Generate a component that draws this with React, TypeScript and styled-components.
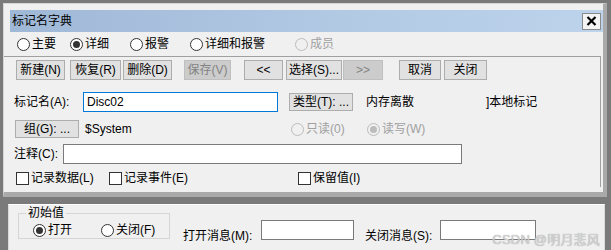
import styled, { createGlobalStyle } from 'styled-components'

const GlobalStyle = createGlobalStyle`
    body {
        margin: 0;
        background: #7a7a7a;
        font-family: "Liberation Sans", "Noto Sans CJK SC", sans-serif;
        font-size: 12px;
        color: #000;
        overflow: hidden;
    }
`

const Page = styled.div`
    width: 611px;
    height: 250px;
    padding: 3px 0 0 3px;
    box-sizing: border-box;
    overflow: hidden;
`
const Window = styled.div`
    width: 604px;
    box-sizing: border-box;
    background: #f0f0f0;
    border-top: 1px solid #d6d6d6;
    border-left: 1px solid #d6d6d6;
    border-right: 4px solid #a9a9a9;
    border-bottom: 5px solid #a9a9a9;
    padding-bottom: 5px;
`
const TitleBar = styled.div`
    margin: 6px 0 0 6px;
    height: 22px;
    padding-left: 2px;
    display: flex;
    align-items: center;
    justify-content: space-between;
    background: linear-gradient(90deg, #9fb8d6 0%, #b2c9e4 55%, #bdd3ec 100%);
`
const TitleText = styled.span`
    font-size: 12px;
    line-height: 22px;
`
const CloseButton = styled.div`
    width: 19px;
    height: 17px;
    margin-right: 2px;
    box-sizing: border-box;
    border: 1px solid #8a8a8a;
    background: #f4f4f4;
    display: flex;
    align-items: center;
    justify-content: center;
`
const Row = styled.div<{ $h: number; $mt?: number; $pl?: number }>`
    display: flex;
    align-items: center;
    height: ${(p) => p.$h}px;
    margin-top: ${(p) => p.$mt ?? 0}px;
    padding-left: ${(p) => p.$pl ?? 0}px;
    white-space: nowrap;
`
const Panel = styled.div`
    border-top: 1px solid #a0a0a0;
    border-right: 1px solid #a0a0a0;
    margin-right: 2px;
`
const Item = styled.div<{ $w?: number; $ml?: number; $disabled?: boolean }>`
    display: flex;
    align-items: center;
    flex: none;
    width: ${(p) => (p.$w ? `${p.$w}px` : 'auto')};
    margin-left: ${(p) => p.$ml ?? 0}px;
    color: ${(p) => (p.$disabled ? '#a0a0a0' : '#000')};
    line-height: 14px;
`
const Circle = styled.span<{ $checked?: boolean; $disabled?: boolean }>`
    position: relative;
    width: 13px;
    height: 13px;
    box-sizing: border-box;
    border-radius: 50%;
    border: 1px solid ${(p) => (p.$disabled ? '#bcbcbc' : '#333')};
    background: ${(p) => (p.$disabled ? '#f0f0f0' : '#fff')};
    margin-right: 2px;
    flex: none;
    &::after {
        content: '';
        display: ${(p) => (p.$checked ? 'block' : 'none')};
        position: absolute;
        left: 2px;
        top: 2px;
        width: 7px;
        height: 7px;
        border-radius: 50%;
        background: ${(p) => (p.$disabled ? '#bcbcbc' : '#333')};
    }
`
const Box = styled.span`
    width: 13px;
    height: 13px;
    box-sizing: border-box;
    border: 1px solid #333;
    background: #fff;
    margin-right: 2px;
    flex: none;
`
const Button = styled.div<{ $w: number; $ml?: number; $h?: number; $disabled?: boolean }>`
    flex: none;
    width: ${(p) => p.$w}px;
    height: ${(p) => p.$h ?? 20}px;
    margin-left: ${(p) => p.$ml ?? 0}px;
    box-sizing: border-box;
    border: 1px solid ${(p) => (p.$disabled ? '#bfbfbf' : '#adadad')};
    background: ${(p) => (p.$disabled ? '#cccccc' : '#e1e1e1')};
    color: ${(p) => (p.$disabled ? '#838383' : '#000')};
    display: flex;
    align-items: center;
    justify-content: center;
    line-height: 14px;
`
const Label = styled.span<{ $w?: number; $ml?: number }>`
    flex: none;
    width: ${(p) => (p.$w ? `${p.$w}px` : 'auto')};
    margin-left: ${(p) => p.$ml ?? 0}px;
    line-height: 14px;
`
const Input = styled.div<{ $w: number; $focus?: boolean; $mt?: number }>`
    flex: none;
    width: ${(p) => p.$w}px;
    height: 20px;
    margin-top: ${(p) => p.$mt ?? 0}px;
    box-sizing: border-box;
    border: 1px solid ${(p) => (p.$focus ? '#0078d7' : '#7a7a7a')};
    background: #fff;
    padding-left: 3px;
    display: flex;
    align-items: center;
    line-height: 14px;
`
const Panel2 = styled.div`
    position: relative;
    margin: 7px 0 0 5px;
    width: 597px;
    height: 60px;
    box-sizing: border-box;
    background: #f0f0f0;
    border-top: 1px solid #fff;
    border-left: 1px solid #dadada;
    border-right: 1px solid #dadada;
    padding: 8px 0 0 9px;
    display: flex;
    align-items: flex-start;
`
const GroupBox = styled.div`
    position: relative;
    width: 152px;
    height: 26px;
    box-sizing: border-box;
    border: 1px solid #d5d5d5;
    padding: 8px 0 0 14px;
    display: flex;
    align-items: center;
`
const GroupTitle = styled.span`
    position: absolute;
    left: 7px;
    top: -8px;
    padding: 0 2px;
    background: #f0f0f0;
    line-height: 14px;
`
const Field = styled.div<{ $ml: number }>`
    display: flex;
    align-items: flex-start;
    margin-left: ${(p) => p.$ml}px;
    white-space: nowrap;
`
const FieldLabel = styled.span<{ $w: number }>`
    width: ${(p) => p.$w}px;
    margin-top: 16px;
    line-height: 14px;
`
const Watermark = styled.span`
    position: absolute;
    right: 4px;
    top: 27px;
    font-size: 13px;
    line-height: 15px;
    color: #d2d2d2;
    text-shadow: 0 0 1px #9a9a9a;
    letter-spacing: 0.2px;
    white-space: nowrap;
`

const Radio = ({ label, checked, disabled, w, ml }: { label: string; checked?: boolean; disabled?: boolean; w?: number; ml?: number }) => (
    <Item $w={w} $ml={ml} $disabled={disabled}>
        <Circle $checked={checked} $disabled={disabled} />
        {label}
    </Item>
)

const Check = ({ label, w }: { label: string; w?: number }) => (
    <Item $w={w}>
        <Box />
        {label}
    </Item>
)

export default function App() {
    return (
        <Page>
            <GlobalStyle />
            <Window>
                <TitleBar>
                    <TitleText>标记名字典</TitleText>
                    <CloseButton>
                        <svg width="11" height="10" viewBox="0 0 11 10">
                            <path d="M1.5 1 L9.5 9 M9.5 1 L1.5 9" stroke="#000" strokeWidth="2.2" />
                        </svg>
                    </CloseButton>
                </TitleBar>
                <Row $h={24} $pl={13}>
                    <Radio label="主要" w={53} />
                    <Radio label="详细" checked w={60} />
                    <Radio label="报警" w={60} />
                    <Radio label="详细和报警" w={105} />
                    <Radio label="成员" disabled />
                </Row>
                <Panel>
                    <Row $h={20} $mt={3} $pl={12}>
                        <Button $w={49}>新建(N)</Button>
                        <Button $w={51} $ml={5}>恢复(R)</Button>
                        <Button $w={49} $ml={2}>删除(D)</Button>
                        <Button $w={47} $ml={12} $disabled>保存(V)</Button>
                        <Button $w={39} $ml={13}>&lt;&lt;</Button>
                        <Button $w={56} $ml={3}>选择(S)...</Button>
                        <Button $w={40} $ml={1} $disabled>&gt;&gt;</Button>
                        <Button $w={42} $ml={16}>取消</Button>
                        <Button $w={43} $ml={3}>关闭</Button>
                    </Row>
                    <Row $h={20} $mt={12} $pl={10}>
                        <Label $w={69}>标记名(A):</Label>
                        <Input $w={195} $focus>Disc02</Input>
                        <Button $w={64} $h={18} $ml={11}>类型(T): ...</Button>
                        <Label $ml={13}>内存离散</Label>
                        <Label $ml={72}>]本地标记</Label>
                    </Row>
                    <Row $h={18} $mt={8} $pl={11}>
                        <Button $w={64} $h={18}>组(G): ...</Button>
                        <Label $w={206} $ml={6}>$System</Label>
                        <Radio label="只读(0)" disabled w={76} />
                        <Radio label="读写(W)" checked disabled />
                    </Row>
                    <Row $h={20} $mt={6} $pl={10}>
                        <Label $w={49}>注释(C):</Label>
                        <Input $w={399} />
                    </Row>
                    <Row $h={18} $mt={5} $pl={12}>
                        <Check label="记录数据(L)" w={93} />
                        <Check label="记录事件(E)" w={189} />
                        <Check label="保留值(I)" />
                    </Row>
                </Panel>
            </Window>
            <Panel2>
                <GroupBox>
                    <GroupTitle>初始值</GroupTitle>
                    <Radio label="打开" checked w={68} />
                    <Radio label="关闭(F)" />
                </GroupBox>
                <Field $ml={13}>
                    <FieldLabel $w={78}>打开消息(M):</FieldLabel>
                    <Input $w={93} $mt={7} />
                </Field>
                <Field $ml={11}>
                    <FieldLabel $w={75}>关闭消息(S):</FieldLabel>
                    <Input $w={96} $mt={7} />
                </Field>
                <Watermark>CSDN @明月悲风</Watermark>
            </Panel2>
        </Page>
    )
}
